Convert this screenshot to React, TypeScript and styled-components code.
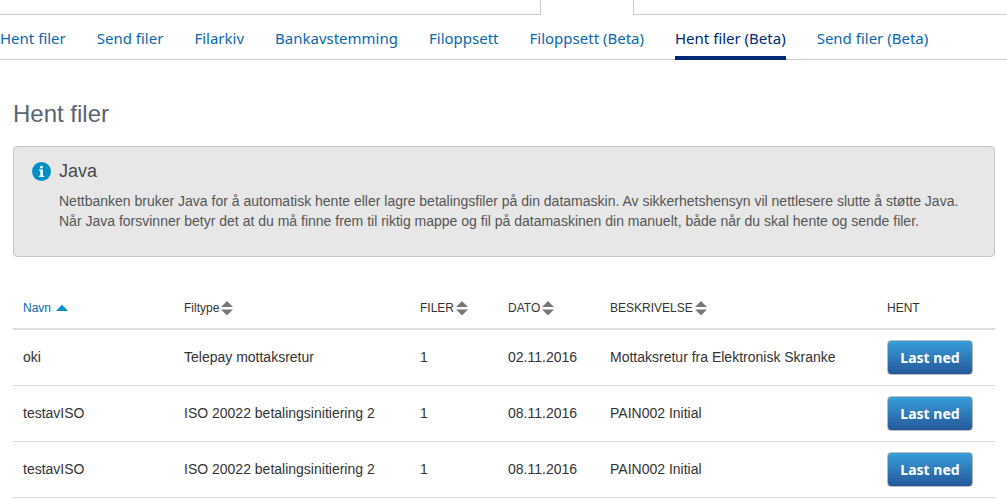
import React from 'react';
import styled, { createGlobalStyle } from 'styled-components';

const GlobalStyle = createGlobalStyle`
  *, *::before, *::after { box-sizing: border-box; }
  body {
    margin: 0;
    background: #fff;
    color: #333;
    font: 14px/20px Arial, 'Liberation Sans', sans-serif;
    overflow-x: hidden;
  }
`;

const TopTabs = styled.div`
  display: flex;
  height: 15px;
`;

const TabEdge = styled.div<{ $width?: number }>`
  flex: ${(p) => (p.$width ? `0 0 ${p.$width}px` : '1 1 0')};
  border-bottom: 1px solid #ccc;
`;

const OpenTab = styled.div`
  flex: 0 0 94px;
  border: solid #ccc;
  border-width: 0 1px;
`;

const Nav = styled.nav`
  display: flex;
  gap: 31px;
  height: 45px;
  border-bottom: 1px solid #ccc;
  white-space: nowrap;
`;

const NavLink = styled.a<{ $active?: boolean }>`
  height: 45px;
  padding-top: 11px;
  border-bottom: 4px solid ${(p) => (p.$active ? '#002776' : 'transparent')};
  color: ${(p) => (p.$active ? '#002776' : '#0b67b2')};
  font: 15px/24px 'Noto Sans', 'Open Sans', sans-serif;
  text-decoration: none;
`;

const Main = styled.main`
  padding: 38px 12px 0 13px;
`;

const Title = styled.h1`
  margin: 0 0 16px;
  color: #5a6470;
  font-size: 24px;
  font-weight: 400;
  line-height: 32px;
`;

const Notice = styled.section`
  display: flex;
  gap: 8px;
  min-height: 111px;
  padding: 14px 10px 24px 18px;
  background: #e7e7e7;
  border: 1px solid #c4c6c6;
  border-radius: 4px;
  color: #555;
`;

const InfoIcon = styled.svg`
  flex: none;
  margin-top: 1px;
`;

const NoticeTitle = styled.h2`
  margin: 0 0 10px;
  color: #4a4a4a;
  font-size: 18px;
  font-weight: 400;
  line-height: 20px;
`;

const NoticeText = styled.p`
  margin: 0;
`;

const Table = styled.table`
  width: 100%;
  margin-top: 30px;
  border-collapse: separate;
  border-spacing: 0;
  table-layout: fixed;
`;

const HeadCell = styled.th<{ $width?: number }>`
  width: ${(p) => (p.$width ? `${p.$width}px` : 'auto')};
  height: 43px;
  padding: 0 10px;
  border-bottom: 2px solid #ddd;
  font-size: 12px;
  font-weight: 400;
  text-align: left;
`;

const SortButton = styled.button<{ $sorted?: boolean }>`
  display: flex;
  align-items: center;
  gap: ${(p) => (p.$sorted ? 5 : 2)}px;
  padding: 0;
  border: 0;
  background: none;
  color: ${(p) => (p.$sorted ? '#0b67b2' : 'inherit')};
  font: inherit;
  cursor: pointer;
`;

const Cell = styled.td`
  height: 56px;
  padding: 0 10px 2px;
  border-bottom: 1px solid #ddd;
`;

const ActionCell = styled(Cell)`
  padding-bottom: 0;
`;

const DownloadButton = styled.button`
  display: block;
  width: 86px;
  height: 35px;
  padding: 0;
  border: 1px solid #bbb;
  border-radius: 4px;
  background: linear-gradient(#38a0da, #24569a) border-box;
  color: #fff;
  font: 700 14px/20px 'Noto Sans', 'Open Sans', sans-serif;
  cursor: pointer;
`;

const links = [
  'Hent filer',
  'Send filer',
  'Filarkiv',
  'Bankavstemming',
  'Filoppsett',
  'Filoppsett (Beta)',
  'Hent filer (Beta)',
  'Send filer (Beta)',
];

const columns = [
  { label: 'Navn', width: 161, sorted: true },
  { label: 'Filtype', width: 236 },
  { label: 'FILER', width: 88 },
  { label: 'DATO', width: 102 },
  { label: 'BESKRIVELSE' },
];

const files = [
  ['oki', 'Telepay mottaksretur', '1', '02.11.2016', 'Mottaksretur fra Elektronisk Skranke'],
  ['testavISO', 'ISO 20022 betalingsinitiering 2', '1', '08.11.2016', 'PAIN002 Initial'],
  ['testavISO', 'ISO 20022 betalingsinitiering 2', '1', '08.11.2016', 'PAIN002 Initial'],
];

function SortIcon({ sorted }: { sorted?: boolean }) {
  return sorted ? (
    <svg width="12" height="14" viewBox="0 0 12 14" aria-hidden="true">
      <path d="M0 10 6 3.7 12 10Z" fill="#0090c8" />
    </svg>
  ) : (
    <svg width="12" height="14" viewBox="0 0 12 14" aria-hidden="true">
      <path d="M0 6 6 0 12 6ZM0 8.6H12L6 14.4Z" fill="#777" />
    </svg>
  );
}

export default function App() {
  return (
    <>
      <GlobalStyle />
      <TopTabs>
        <TabEdge $width={540} />
        <OpenTab />
        <TabEdge />
      </TopTabs>
      <Nav>
        {links.map((label) => (
          <NavLink key={label} href="#" $active={label === 'Hent filer (Beta)'}>
            {label}
          </NavLink>
        ))}
      </Nav>
      <Main>
        <Title>Hent filer</Title>
        <Notice>
          <InfoIcon width="19" height="19" viewBox="0 0 19 19" aria-hidden="true">
            <circle cx="9.5" cy="9.5" r="9.5" fill="#0090c8" />
            <circle cx="9.5" cy="5.2" r="1.4" fill="#fff" />
            <path d="M7 7.6h3.9v6.2h1.3V15H6.9v-1.2h1.4V8.8H7Z" fill="#fff" />
          </InfoIcon>
          <div>
            <NoticeTitle>Java</NoticeTitle>
            <NoticeText>
              Nettbanken bruker Java for å automatisk hente eller lagre betalingsfiler på din
              datamaskin. Av sikkerhetshensyn vil nettlesere slutte å støtte Java.
              <br />
              Når Java forsvinner betyr det at du må finne frem til riktig mappe og fil på
              datamaskinen din manuelt, både når du skal hente og sende filer.
            </NoticeText>
          </div>
        </Notice>
        <Table>
          <thead>
            <tr>
              {columns.map((c) => (
                <HeadCell key={c.label} scope="col" $width={c.width}>
                  <SortButton type="button" $sorted={c.sorted}>
                    {c.label}
                    <SortIcon sorted={c.sorted} />
                  </SortButton>
                </HeadCell>
              ))}
              <HeadCell scope="col" $width={118}>
                HENT
              </HeadCell>
            </tr>
          </thead>
          <tbody>
            {files.map((file, i) => (
              <tr key={i}>
                {file.map((value, j) => (
                  <Cell key={j}>{value}</Cell>
                ))}
                <ActionCell>
                  <DownloadButton type="button">Last ned</DownloadButton>
                </ActionCell>
              </tr>
            ))}
          </tbody>
        </Table>
      </Main>
    </>
  );
}
